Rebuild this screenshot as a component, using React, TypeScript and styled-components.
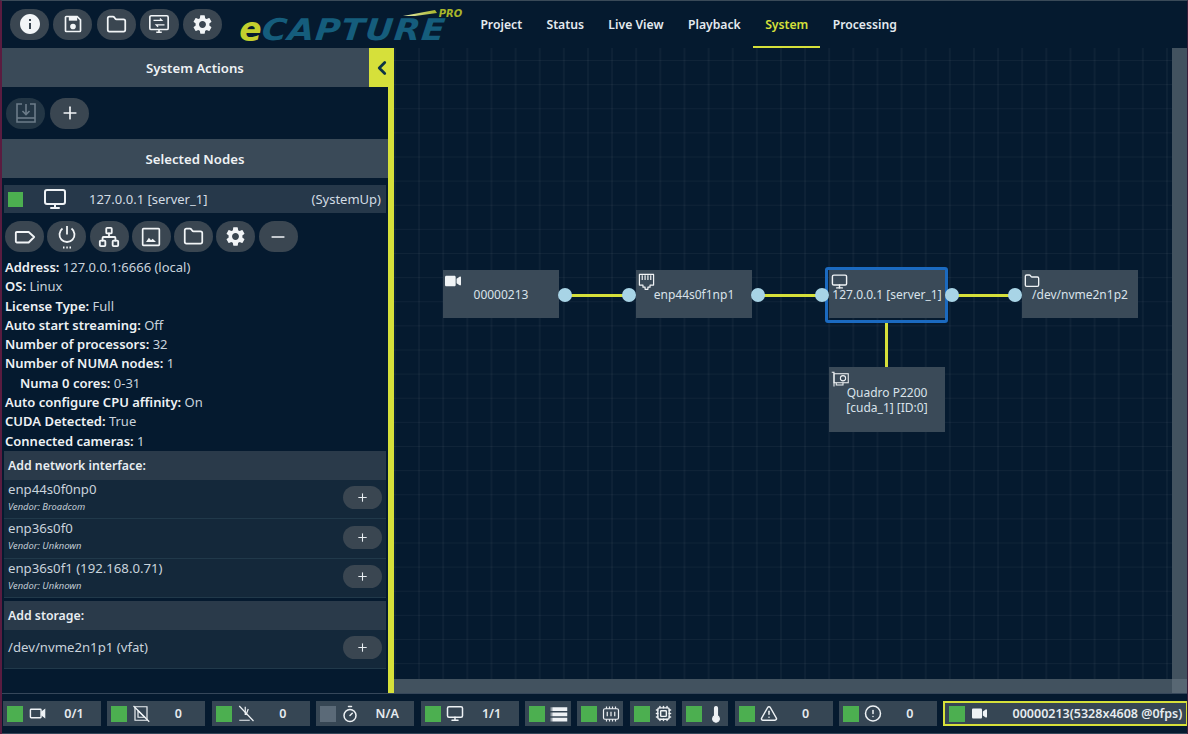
import * as React from "react";
import styled, { createGlobalStyle } from "styled-components";
import {
  ChevronLeft,
  CircleAlert,
  Cpu,
  Folder,
  Minus,
  Monitor,
  Network,
  Plus,
  Timer,
  TriangleAlert,
} from "lucide-react";
import { MdInfo, MdSettings } from "react-icons/md";
import { FaVideo } from "react-icons/fa";

const YELLOW = "#d6e03a";
const FONT = `"Noto Sans", "Open Sans", sans-serif`;

const GlobalStyle = createGlobalStyle`
  html, body { margin: 0; padding: 0; height: 100%; }
  body { background: #051a2f; font-family: ${FONT}; color: #d9e2ea; }
  #root { height: 100%; }
  * { box-sizing: border-box; }
`;

const Page = styled.div`
  width: 1188px;
  height: 734px;
  display: flex;
  flex-direction: column;
  background: #051a2f;
  border-top: 1px solid #3a4a58;
  border-left: 2px solid #5a1c40;
  border-right: 1px solid #3a1c3a;
  overflow: hidden;
`;

const TopBar = styled.div`
  height: 47px;
  flex: none;
  display: flex;
  align-items: center;
  padding-left: 8px;
`;

const TopButtons = styled.div`
  display: flex;
  gap: 4.3px;
  margin-top: -1px;
`;

const RoundButton = styled.button<{ $disabled?: boolean }>`
  width: 39px;
  height: 31px;
  flex: none;
  padding: 0;
  display: flex;
  align-items: center;
  justify-content: center;
  border: none;
  border-radius: 16px;
  color: ${(p) => (p.$disabled ? "#6c7c89" : "#f2f5f7")};
  background: ${(p) => (p.$disabled ? "#233645" : "#3a4651")};
`;

const Logo = styled.div`
  position: relative;
  width: 224px;
  height: 40px;
  margin-left: 17px;
  padding-bottom: 3px;
  display: flex;
  align-items: flex-end;
  font-family: "DejaVu Sans", sans-serif;
  font-style: italic;
  font-weight: 700;
`;

const LogoE = styled.span`
  font-size: 33px;
  line-height: 24px;
  color: #c3cf2e;
`;

const LogoWord = styled.span`
  font-size: 30px;
  line-height: 24px;
  letter-spacing: 0.8px;
  color: #155d7c;
  transform: scaleX(1.14) skewX(-5deg);
  transform-origin: left center;
`;

const LogoPro = styled.span`
  position: absolute;
  top: 4px;
  right: 1px;
  font-size: 10px;
  line-height: 9px;
  font-weight: 700;
  color: #a9b52a;
`;

const LogoSwoosh = styled.svg`
  position: absolute;
  top: 5px;
  left: 164px;
`;

const Tabs = styled.nav`
  display: flex;
  height: 100%;
  margin-left: 5px;
`;

const Tab = styled.div<{ $active?: boolean }>`
  padding: 1px 12.2px 0;
  display: flex;
  align-items: center;
  font-size: 12.2px;
  font-weight: 600;
  color: ${(p) => (p.$active ? YELLOW : "#e4eaef")};
  border-bottom: 2px solid ${(p) => (p.$active ? YELLOW : "transparent")};
`;

const Main = styled.div`
  flex: 1;
  min-height: 0;
  display: flex;
`;

const SidePanel = styled.aside`
  position: relative;
  width: 392px;
  flex: none;
  display: flex;
  flex-direction: column;
  border-right: 6px solid ${YELLOW};
`;

const CollapseButton = styled.div`
  position: absolute;
  top: 0;
  right: -6px;
  width: 25px;
  height: 39px;
  display: flex;
  align-items: center;
  justify-content: center;
  background: ${YELLOW};
  color: #0c3344;
`;

const PanelHeader = styled.div`
  height: 39px;
  flex: none;
  display: flex;
  align-items: center;
  justify-content: center;
  background: #3a4a58;
  font-size: 13.2px;
  font-weight: 600;
  color: #eef2f5;
`;

const ActionRow = styled.div`
  height: 52px;
  flex: none;
  display: flex;
  align-items: center;
  gap: 5px;
  padding-left: 4px;
`;

const NodeRow = styled.div`
  height: 28px;
  flex: none;
  margin: 7px 2px 0;
  padding: 0 5px 0 4px;
  display: flex;
  align-items: center;
  background: #26384a;
  font-size: 13px;
  color: #d3dce4;
`;

const StatusSquare = styled.span<{ $off?: boolean; $size?: number }>`
  width: ${(p) => p.$size ?? 15}px;
  height: ${(p) => p.$size ?? 15}px;
  flex: none;
  background: ${(p) => (p.$off ? "#5b6a78" : "#4caf50")};
`;

const NodeIcon = styled.span`
  width: 24px;
  margin: 0 22px 0 20px;
  display: flex;
  color: #eef2f5;
`;

const NodeName = styled.span`
  flex: 1;
`;

const NodeButtons = styled.div`
  height: 31px;
  flex: none;
  margin-top: 8px;
  padding-left: 3px;
  display: flex;
  gap: 3.3px;
`;

const Details = styled.div`
  flex: none;
  margin-top: 6px;
  padding-left: 3px;
  font-size: 13px;
  line-height: 19.3px;
  color: #c9d3dc;
`;

const DetailLine = styled.div<{ $indent?: boolean }>`
  padding-left: ${(p) => (p.$indent ? "15px" : "0")};
  white-space: nowrap;
  b {
    font-weight: 600;
    color: #eef2f5;
  }
`;

const Section = styled.section`
  margin: 0 2px 3px;
`;

const SectionTitle = styled.div`
  height: 29px;
  padding-left: 4px;
  display: flex;
  align-items: center;
  background: #2a3a4a;
  font-size: 12.3px;
  font-weight: 600;
  color: #e8edf1;
`;

const DeviceRow = styled.div<{ $h: number }>`
  height: ${(p) => p.$h}px;
  padding: 0 4px 3px;
  display: flex;
  align-items: center;
  justify-content: space-between;
  background: #14283a;
  border-bottom: 1px solid #21394a;
`;

const DeviceName = styled.div`
  font-size: 13.2px;
  line-height: 17px;
  color: #c9d3dc;
`;

const DeviceVendor = styled.div`
  font-size: 9.4px;
  line-height: 17px;
  font-style: italic;
  color: #c2ccd5;
`;

const SmallAdd = styled.button`
  width: 39px;
  height: 23px;
  padding: 0;
  display: flex;
  align-items: center;
  justify-content: center;
  border: none;
  border-radius: 12px;
  background: #3a4651;
  color: #e8edf1;
`;

const Viewport = styled.div`
  flex: 1;
  min-width: 0;
  display: grid;
  grid-template-columns: 1fr 15px;
  grid-template-rows: 1fr 14px;
`;

const Canvas = styled.div`
  position: relative;
  overflow: hidden;
  background-color: #051a2f;
  background-image: linear-gradient(to right, rgba(255, 255, 255, 0.035) 2px, transparent 2px),
    linear-gradient(to bottom, rgba(255, 255, 255, 0.045) 1px, transparent 1px);
  background-size: 24.13px 24.13px;
  background-position: 0 12px;
`;

const ScrollTrack = styled.div`
  background: #42525f;
`;

const ScrollCorner = styled.div`
  background: #586773;
`;

const GraphNode = styled.div<{ $x: number; $y: number; $h?: number }>`
  position: absolute;
  left: ${(p) => p.$x}px;
  top: ${(p) => p.$y}px;
  width: 116px;
  height: ${(p) => p.$h ?? 48}px;
  display: flex;
  align-items: center;
  justify-content: center;
  text-align: center;
  background: #3a4a58;
  font-size: 12px;
  line-height: 15px;
  color: #d9e2ea;
  white-space: nowrap;
`;

const SelectedOutline = styled.div<{ $x: number; $y: number }>`
  position: absolute;
  left: ${(p) => p.$x}px;
  top: ${(p) => p.$y}px;
  width: 123px;
  height: 56px;
  border: 3px solid #1b6ac0;
  border-radius: 3px;
`;

const NodeGlyph = styled.span`
  position: absolute;
  top: 3px;
  left: 2px;
  display: flex;
  color: #f0f3f5;
`;

const Port = styled.span<{ $x: number; $y: number }>`
  position: absolute;
  left: ${(p) => p.$x - 7}px;
  top: ${(p) => p.$y - 7}px;
  width: 14px;
  height: 14px;
  border-radius: 50%;
  background: #a8d4e6;
`;

const Wire = styled.span<{ $x: number; $y: number; $w: number; $h: number }>`
  position: absolute;
  left: ${(p) => p.$x}px;
  top: ${(p) => p.$y}px;
  width: ${(p) => p.$w}px;
  height: ${(p) => p.$h}px;
  background: ${YELLOW};
`;

const StatusBar = styled.footer`
  height: 41px;
  flex: none;
  display: flex;
  align-items: center;
  gap: 6.4px;
  padding: 0 0 0 1px;
  border-top: 1px solid #36475a;
  border-bottom: 1px solid #36475a;
`;

const StatusItem = styled.div<{ $w: number; $selected?: boolean }>`
  width: ${(p) => p.$w}px;
  height: 25px;
  flex: none;
  padding: 0 4px;
  display: flex;
  align-items: center;
  gap: 5px;
  background: #364654;
  border: ${(p) => (p.$selected ? `2px solid ${YELLOW}` : "none")};
  font-size: 12.5px;
  font-weight: 600;
  color: #e6ebef;
`;

const StatusIcon = styled.span`
  width: 18px;
  flex: none;
  display: flex;
  justify-content: center;
  color: #eef2f5;
`;

const StatusValue = styled.span<{ $right?: boolean }>`
  flex: 1;
  text-align: ${(p) => (p.$right ? "right" : "center")};
  white-space: nowrap;
`;

type IconProps = { size?: number };

function FloppyIcon({ size = 20 }: IconProps) {
  return (
    <svg width={size} height={size} viewBox="0 0 24 24" fill="none" stroke="currentColor" strokeWidth="2">
      <path d="M4 3h13l4 4v13a1 1 0 0 1-1 1H4a1 1 0 0 1-1-1V4a1 1 0 0 1 1-1z" />
      <rect x="7" y="3" width="10" height="5" fill="currentColor" stroke="none" />
      <circle cx="12" cy="15" r="2.4" fill="currentColor" />
    </svg>
  );
}

function ScreenIcon({ size = 22 }: IconProps) {
  return (
    <svg width={size} height={size} viewBox="0 0 24 24" fill="none" stroke="currentColor" strokeWidth="1.8">
      <rect x="2" y="3" width="20" height="15" rx="1.5" />
      <path d="M9 21h6M12 18v3" />
      <path d="M6 8h9l-2-2M18 13H9l2 2" strokeWidth="1.4" />
    </svg>
  );
}

function ImportIcon({ size = 24 }: IconProps) {
  return (
    <svg width={size} height={size} viewBox="0 0 24 24" fill="none" stroke="currentColor" strokeWidth="1.6">
      <path d="M8 3H3v18h18V3h-5" />
      <path d="M12 3v10M8.5 10l3.5 3.5 3.5-3.5" />
      <path d="M3 17h18" />
    </svg>
  );
}

function TagIcon({ size = 22 }: IconProps) {
  return (
    <svg width={size} height={size} viewBox="0 0 24 24" fill="none" stroke="currentColor" strokeWidth="2">
      <path d="M3 6.500h13l6 5.500-6 6H3a1 1 0 0 1-1-1v-9.500a1 1 0 0 1 1-1z" strokeLinejoin="round" />
    </svg>
  );
}

function PowerDotsIcon({ size = 24 }: IconProps) {
  return (
    <svg width={size} height={size} viewBox="0 0 24 24" fill="none" stroke="currentColor" strokeWidth="1.8">
      <path d="M12 1v8.500" />
      <path d="M7.500 3.500a7.500 7.500 0 1 0 9 0" />
      <path d="M8 22.500h1.500M11.300 22.500h1.500M14.500 22.500H16" />
    </svg>
  );
}

function PictureIcon({ size = 20 }: IconProps) {
  return (
    <svg width={size} height={size} viewBox="0 0 24 24" fill="none" stroke="currentColor" strokeWidth="2">
      <rect x="2" y="2" width="20" height="20" rx="1" />
      <path d="M6 18l3.500-5 2.500 3 2-2 4 4z" fill="currentColor" stroke="none" />
    </svg>
  );
}

function CameraOutlineIcon({ size = 17 }: IconProps) {
  return (
    <svg width={size} height={size} viewBox="0 0 24 24" fill="none" stroke="currentColor" strokeWidth="2">
      <rect x="2" y="6" width="15" height="12" rx="1" />
      <path d="M18 10l4-3v10l-4-3z" fill="currentColor" />
    </svg>
  );
}

function FrameOffIcon({ size = 19 }: IconProps) {
  return (
    <svg width={size} height={size} viewBox="0 0 24 24" fill="none" stroke="currentColor" strokeWidth="1.6">
      <path d="M4 3h16v18H4z" />
      <path d="M8 8v9h9z" />
      <path d="M2 2l21 21" />
    </svg>
  );
}

function SignalOffIcon({ size = 19 }: IconProps) {
  return (
    <svg width={size} height={size} viewBox="0 0 24 24" fill="none" stroke="currentColor" strokeWidth="1.6">
      <path d="M3 2l19 20M3 21h14" />
      <path d="M11 3v11M15 6l-3 8" />
    </svg>
  );
}

function RowsIcon({ size = 18 }: IconProps) {
  return (
    <svg width={size} height={size} viewBox="0 0 24 24" fill="currentColor">
      <path d="M3 3h20v5H3zM1 3h1v5H1zM3 10h20v5H3zM1 10h1v5H1zM3 17h20v5H3zM1 17h1v5H1z" />
    </svg>
  );
}

function MemoryIcon({ size = 18 }: IconProps) {
  return (
    <svg width={size} height={size} viewBox="0 0 24 24" fill="none" stroke="currentColor" strokeWidth="1.6">
      <rect x="2" y="5" width="20" height="14" rx="2" />
      <path d="M7 9v6M12 9v6M17 9v6M6 2v3M10 2v3M14 2v3M18 2v3M6 19v3M10 19v3M14 19v3M18 19v3" />
    </svg>
  );
}

function ThermometerIcon({ size = 20 }: IconProps) {
  return (
    <svg width={size} height={size} viewBox="0 0 24 24" fill="currentColor" stroke="currentColor" strokeWidth="1.500">
      <path d="M10 14.500V4a2 2 0 0 1 4 0v10.500a4.500 4.500 0 1 1-4 0z" />
    </svg>
  );
}

function EthernetIcon({ size = 17 }: IconProps) {
  return (
    <svg width={size} height={size} viewBox="0 0 24 24" fill="none" stroke="currentColor" strokeWidth="1.700">
      <path d="M2 2h20v15h-5v3h-3v3h-4v-3H7v-3H2z" strokeLinejoin="round" />
      <path d="M6 3v7M10 3v7M14 3v7M18 3v7" />
    </svg>
  );
}

function GpuIcon({ size = 18 }: IconProps) {
  return (
    <svg width={size} height={size} viewBox="0 0 24 24" fill="none" stroke="currentColor" strokeWidth="1.400">
      <path d="M1 3h3v19" />
      <rect x="4" y="5" width="19" height="12" />
      <circle cx="16" cy="11" r="3.500" />
      <path d="M7 17v3h9v-3" />
    </svg>
  );
}

function LogoMark() {
  return (
    <Logo>
      <LogoE>e</LogoE>
      <LogoWord>CAPTURE</LogoWord>
      <LogoSwoosh width="34" height="6" viewBox="0 0 34 6">
        <defs>
          <linearGradient id="swoosh" x1="0" x2="1" y1="0" y2="0">
            <stop offset="0" stopColor="#e8eeb0" />
            <stop offset="1" stopColor="#a9b52a" />
          </linearGradient>
        </defs>
        <polygon points="0,6 32,0 34,3 12,6" fill="url(#swoosh)" />
      </LogoSwoosh>
      <LogoPro>PRO</LogoPro>
    </Logo>
  );
}

const details: { label: string; value: string; indent?: boolean }[] = [
  { label: "Address:", value: "127.0.0.1:6666 (local)" },
  { label: "OS:", value: "Linux" },
  { label: "License Type:", value: "Full" },
  { label: "Auto start streaming:", value: "Off" },
  { label: "Number of processors:", value: "32" },
  { label: "Number of NUMA nodes:", value: "1" },
  { label: "Numa 0 cores:", value: "0-31", indent: true },
  { label: "Auto configure CPU affinity:", value: "On" },
  { label: "CUDA Detected:", value: "True" },
  { label: "Connected cameras:", value: "1" },
];

const interfaces = [
  { name: "enp44s0f0np0", vendor: "Vendor: Broadcom" },
  { name: "enp36s0f0", vendor: "Vendor: Unknown" },
  { name: "enp36s0f1 (192.168.0.71)", vendor: "Vendor: Unknown" },
];

const tabs = ["Project", "Status", "Live View", "Playback", "System", "Processing"];

const statusItems: { w: number; icon: React.ReactNode; value?: string; off?: boolean }[] = [
  { w: 98, icon: <CameraOutlineIcon />, value: "0/1" },
  { w: 98, icon: <FrameOffIcon />, value: "0" },
  { w: 98, icon: <SignalOffIcon />, value: "0" },
  { w: 98, icon: <Timer size={20} />, value: "N/A", off: true },
  { w: 98, icon: <Monitor size={21} />, value: "1/1" },
  { w: 46, icon: <RowsIcon /> },
  { w: 46, icon: <MemoryIcon /> },
  { w: 46, icon: <Cpu size={17} /> },
  { w: 46, icon: <ThermometerIcon /> },
  { w: 98, icon: <TriangleAlert size={19} />, value: "0" },
  { w: 98, icon: <CircleAlert size={19} />, value: "0" },
];

export default function App() {
  return (
    <Page>
      <GlobalStyle />
      <TopBar>
        <TopButtons>
          <RoundButton><MdInfo size={24} /></RoundButton>
          <RoundButton><FloppyIcon /></RoundButton>
          <RoundButton><Folder size={21} /></RoundButton>
          <RoundButton><ScreenIcon /></RoundButton>
          <RoundButton><MdSettings size={23} /></RoundButton>
        </TopButtons>
        <LogoMark />
        <Tabs>
          {tabs.map((tab) => (
            <Tab key={tab} $active={tab === "System"}>{tab}</Tab>
          ))}
        </Tabs>
      </TopBar>

      <Main>
        <SidePanel>
          <CollapseButton><ChevronLeft size={22} strokeWidth={3} /></CollapseButton>
          <PanelHeader>System Actions</PanelHeader>
          <ActionRow>
            <RoundButton $disabled><ImportIcon /></RoundButton>
            <RoundButton><Plus size={20} /></RoundButton>
          </ActionRow>
          <PanelHeader>Selected Nodes</PanelHeader>
          <NodeRow>
            <StatusSquare />
            <NodeIcon><Monitor size={24} /></NodeIcon>
            <NodeName>127.0.0.1 [server_1]</NodeName>
            <span>(SystemUp)</span>
          </NodeRow>
          <NodeButtons>
            <RoundButton><TagIcon /></RoundButton>
            <RoundButton><PowerDotsIcon /></RoundButton>
            <RoundButton><Network size={22} /></RoundButton>
            <RoundButton><PictureIcon /></RoundButton>
            <RoundButton><Folder size={21} /></RoundButton>
            <RoundButton><MdSettings size={23} /></RoundButton>
            <RoundButton><Minus size={20} /></RoundButton>
          </NodeButtons>
          <Details>
            {details.map((d) => (
              <DetailLine key={d.label} $indent={d.indent}>
                <b>{d.label}</b> {d.value}
              </DetailLine>
            ))}
          </Details>
          <Section>
            <SectionTitle>Add network interface:</SectionTitle>
            {interfaces.map((item) => (
              <DeviceRow key={item.name} $h={39.5}>
                <div>
                  <DeviceName>{item.name}</DeviceName>
                  <DeviceVendor>{item.vendor}</DeviceVendor>
                </div>
                <SmallAdd><Plus size={13} /></SmallAdd>
              </DeviceRow>
            ))}
          </Section>
          <Section>
            <SectionTitle>Add storage:</SectionTitle>
            <DeviceRow $h={39}>
              <DeviceName>/dev/nvme2n1p1 (vfat)</DeviceName>
              <SmallAdd><Plus size={13} /></SmallAdd>
            </DeviceRow>
          </Section>
        </SidePanel>

        <Viewport>
          <Canvas>
            <Wire $x={165} $y={245.5} $w={70} $h={3} />
            <Wire $x={364} $y={245.5} $w={64} $h={3} />
            <Wire $x={558} $y={245.5} $w={63} $h={3} />
            <Wire $x={491} $y={272} $w={3} $h={47} />

            <GraphNode $x={49} $y={222}>
              <NodeGlyph><FaVideo size={16} /></NodeGlyph>
              00000213
            </GraphNode>
            <GraphNode $x={242} $y={222}>
              <NodeGlyph><EthernetIcon /></NodeGlyph>
              enp44s0f1np1
            </GraphNode>
            <SelectedOutline $x={431} $y={219} />
            <GraphNode $x={435} $y={222}>
              <NodeGlyph><Monitor size={17} /></NodeGlyph>
              127.0.0.1 [server_1]
            </GraphNode>
            <GraphNode $x={628} $y={222}>
              <NodeGlyph><Folder size={16} /></NodeGlyph>
              /dev/nvme2n1p2
            </GraphNode>
            <GraphNode $x={435} $y={319} $h={65}>
              <NodeGlyph><GpuIcon /></NodeGlyph>
              <span>Quadro P2200<br />[cuda_1] [ID:0]</span>
            </GraphNode>

            <Port $x={171} $y={247} />
            <Port $x={235} $y={247} />
            <Port $x={364} $y={247} />
            <Port $x={428} $y={247} />
            <Port $x={558} $y={247} />
            <Port $x={621} $y={247} />
          </Canvas>
          <ScrollTrack />
          <ScrollTrack />
          <ScrollCorner />
        </Viewport>
      </Main>

      <StatusBar>
        {statusItems.map((item, i) => (
          <StatusItem key={i} $w={item.w}>
            <StatusSquare $off={item.off} $size={16} />
            <StatusIcon>{item.icon}</StatusIcon>
            {item.value && <StatusValue>{item.value}</StatusValue>}
          </StatusItem>
        ))}
        <StatusItem $w={245} $selected>
          <StatusSquare $size={16} />
          <StatusIcon><FaVideo size={15} /></StatusIcon>
          <StatusValue $right>00000213(5328x4608 @0fps)</StatusValue>
        </StatusItem>
      </StatusBar>
    </Page>
  );
}
